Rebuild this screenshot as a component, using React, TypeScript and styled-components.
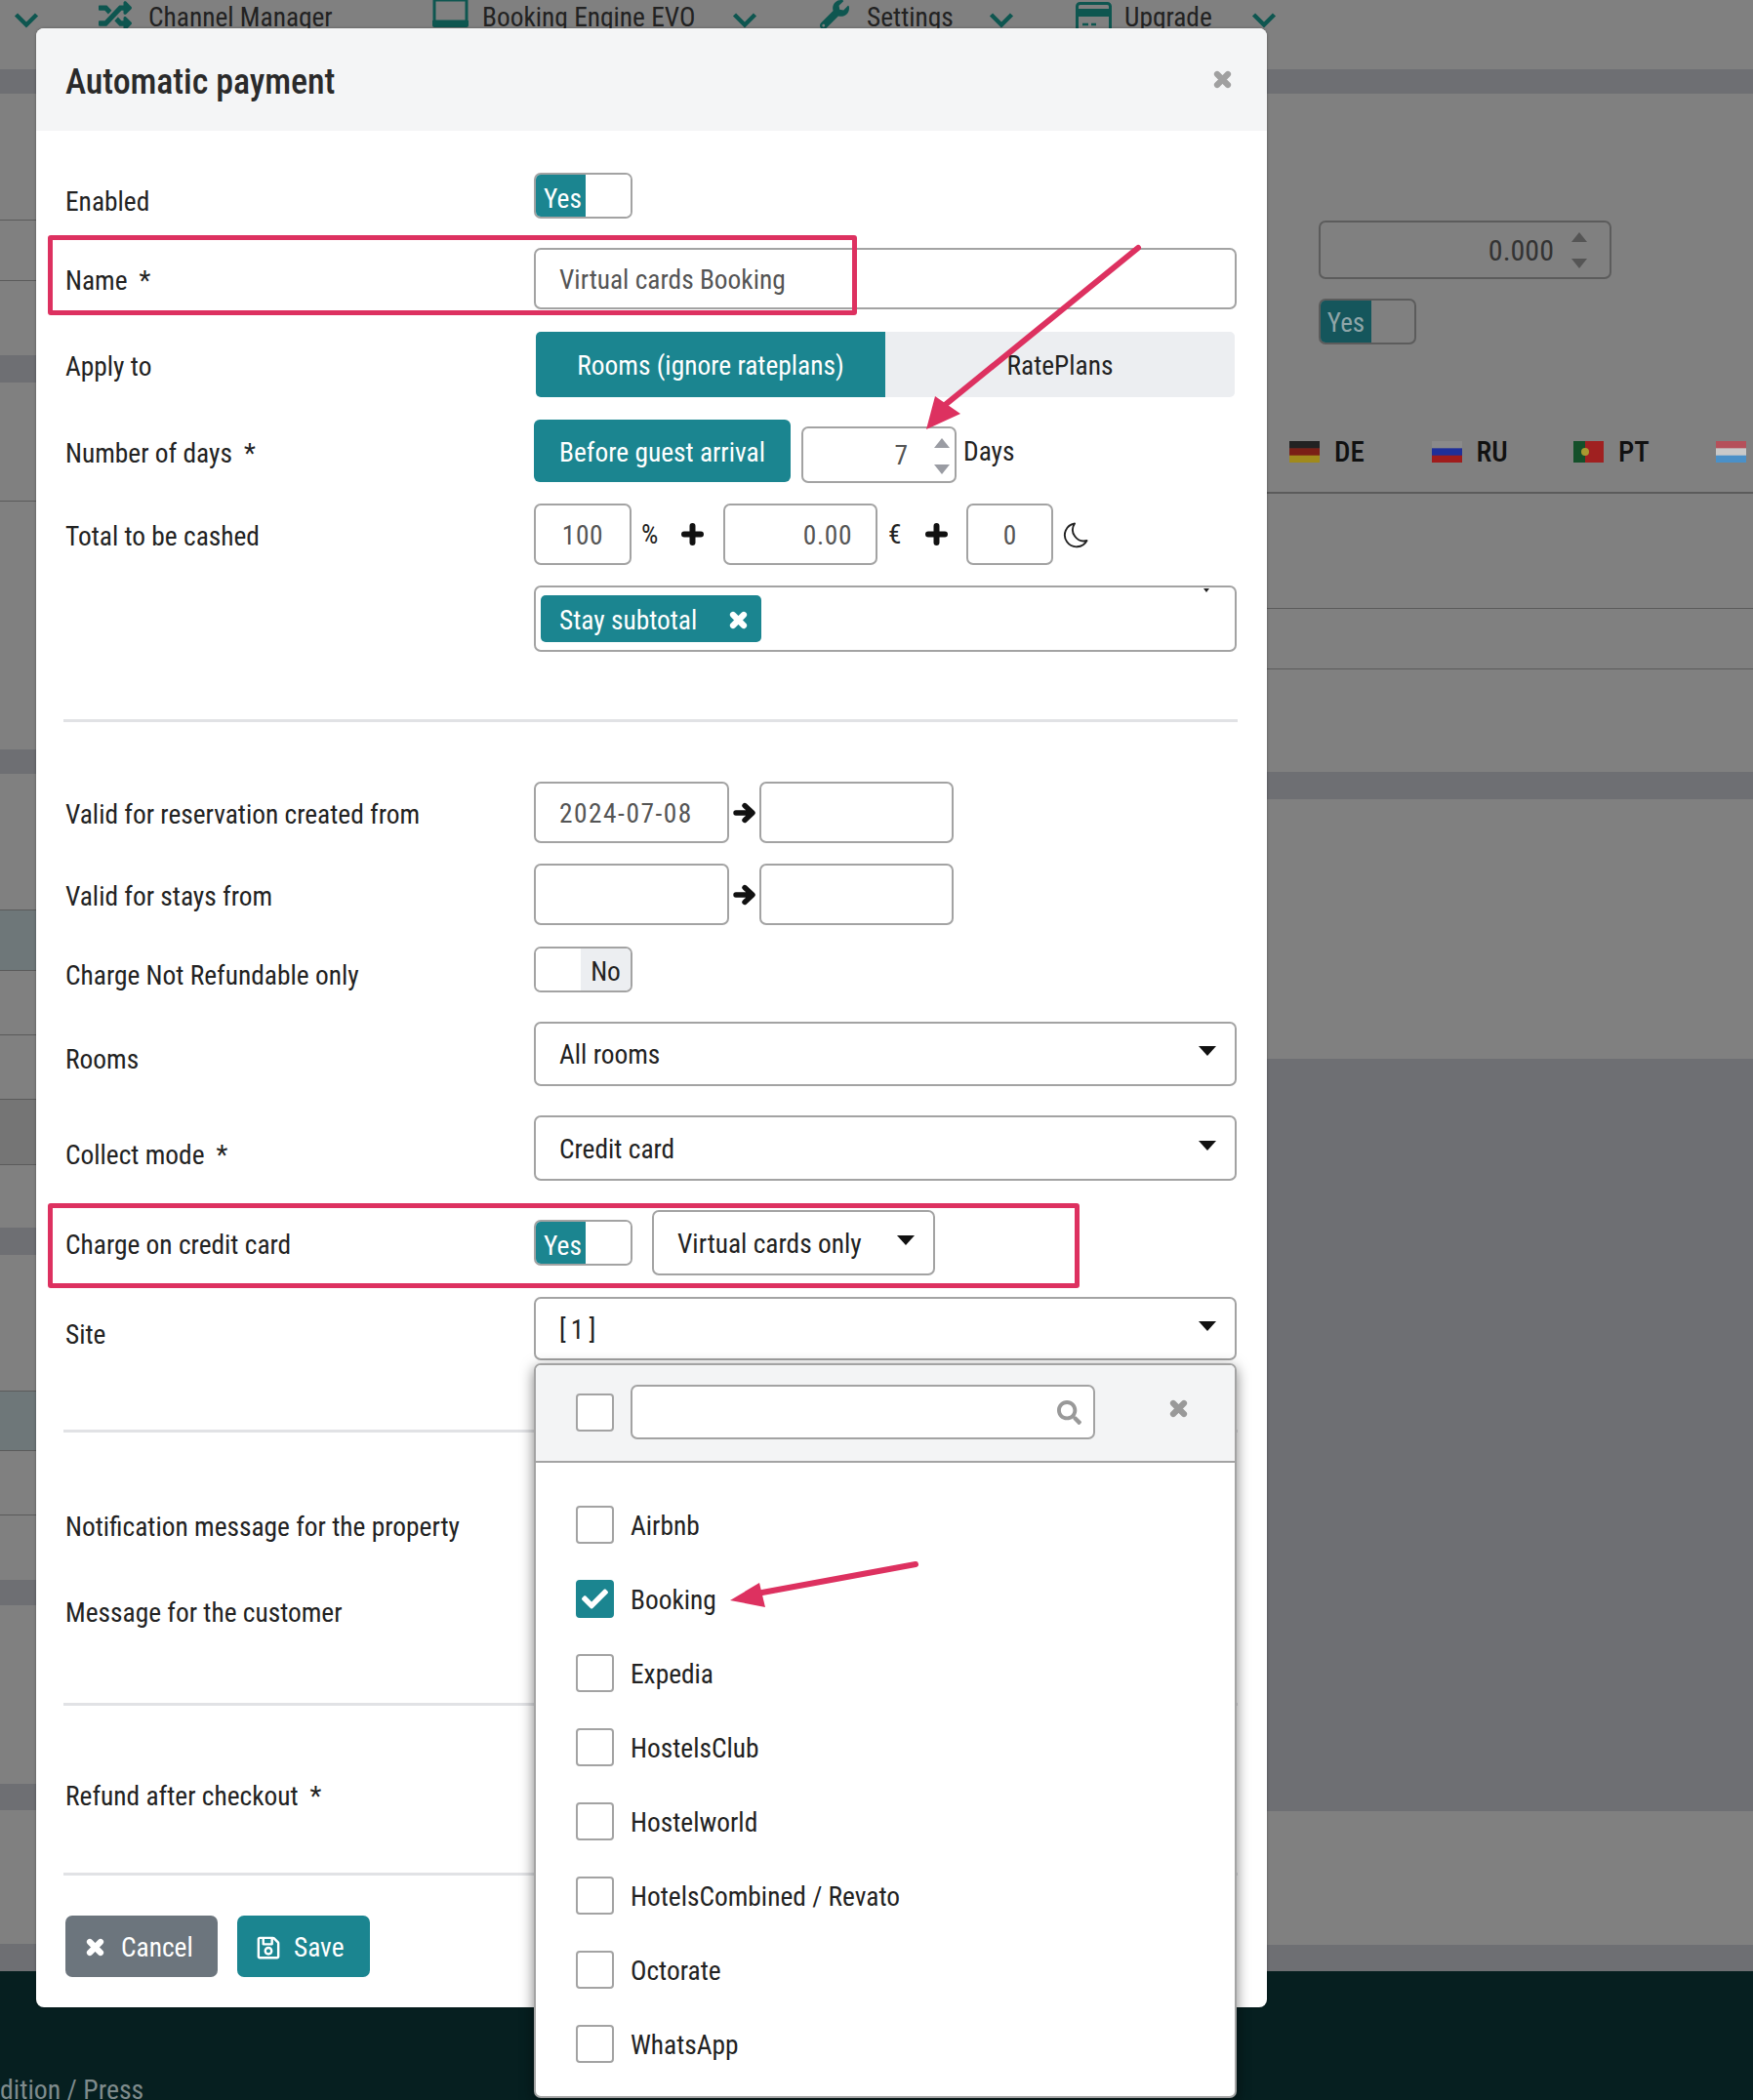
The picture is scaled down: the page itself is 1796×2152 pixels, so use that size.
import React from "react";
import styled, { createGlobalStyle } from "styled-components";
import { FaCheck, FaRegSave, FaSearch, FaRandom, FaWrench } from "react-icons/fa";

const TEAL = "#1b8590";
const BORDER = "#a3a3a3";
const RED = "#dd3160";

const Global = createGlobalStyle`
  html, body { margin: 0; padding: 0; }
  body {
    font-family: Roboto, "Liberation Sans", sans-serif;
    font-stretch: condensed;
    font-size: 27.4px;
    color: #222;
    overflow: hidden;
  }
`;

const Page = styled.div`
  position: relative;
  width: 1796px;
  height: 2152px;
  overflow: hidden;
  background: #808080;
  display: flex;
  flex-direction: column;
`;

/* ---------- page behind the modal ---------- */
const Nav = styled.nav`
  height: 71px;
  display: flex;
  padding-left: 14px;
  align-items: flex-start;
  box-sizing: border-box;
`;
const NavIcon = styled.span<{ $ml: number; $w: number; $h?: number }>`
  margin-left: ${(p) => p.$ml}px;
  width: ${(p) => p.$w}px;
  height: ${(p) => p.$h || 36}px;
  flex: none;
  display: flex;
  align-items: center;
  justify-content: center;
  color: #0e5650;
  svg { flex: none; }
`;
const NavLabel = styled.span<{ $ml: number; $w: number }>`
  margin-left: ${(p) => p.$ml}px;
  width: ${(p) => p.$w}px;
  flex: none;
  line-height: 36px;
  font-size: 27.4px;
  color: #222;
  white-space: nowrap;
`;
const Columns = styled.div`
  display: grid;
  grid-template-columns: 37px 1261px 498px;
  height: 1949px;
`;
const StripeColumn = styled.div`
  display: flex;
  flex-direction: column;
  min-width: 0;
  overflow: hidden;
`;
const TONES: Record<string, string> = {
  plain: "#808080",
  band: "#6e6f73",
  teal: "#6e7779",
  dark: "#757575",
};
const Stripe = styled.div<{ $h: number; $tone: string; $line?: boolean }>`
  height: ${(p) => p.$h}px;
  flex: none;
  box-sizing: border-box;
  background: ${(p) => TONES[p.$tone]};
  border-bottom: ${(p) => (p.$line ? "1px solid #5b5b5b" : "none")};
`;
const SidePanel = styled.div`
  flex: none;
  height: 410px;
  box-sizing: border-box;
  border-bottom: 2px solid #5b5b5b;
  padding-top: 130px;
  display: flex;
  flex-direction: column;
`;
const DimNumber = styled.div`
  margin-left: 53px;
  width: 300px;
  height: 60px;
  box-sizing: border-box;
  border: 2px solid #5c5c5c;
  border-radius: 7px;
  display: flex;
  align-items: center;
  justify-content: flex-end;
  padding: 0 21px 0 0;
  gap: 16px;
  color: #333;
  font-size: 30px;
`;
const DimToggle = styled.div`
  margin: 20px 0 0 53px;
  width: 100px;
  height: 47px;
  box-sizing: border-box;
  border: 2px solid #5c5c5c;
  border-radius: 7px;
  overflow: hidden;
  display: flex;
`;
const DimYes = styled.div`
  width: 52px;
  background: #15565c;
  color: #8fa5a8;
  font-size: 27px;
  display: flex;
  align-items: center;
  justify-content: center;
  padding-top: 2px;
`;
const LangRow = styled.div`
  margin: 92px 0 0 23px;
  display: flex;
  width: 520px;
`;
const Lang = styled.div`
  width: 145.5px;
  flex: none;
  display: flex;
  align-items: center;
  gap: 15px;
  font-size: 29px;
  font-weight: 500;
  color: #111;
  height: 36px;
`;
const Footer = styled.footer`
  height: 132px;
  background: #061f20;
  color: #7f8b8c;
  padding-top: 104px;
  box-sizing: border-box;
  font-size: 27.8px;
  line-height: 36px;
  white-space: nowrap;
`;

/* ---------- modal ---------- */
const Modal = styled.div`
  position: absolute;
  left: 37px;
  top: 29px;
  width: 1261px;
  background: #fff;
  border-radius: 8px;
  box-shadow: 0 0 3px rgba(0, 0, 0, 0.35);
  display: flex;
  flex-direction: column;
  padding-bottom: 31px;
`;
const Head = styled.header`
  height: 105px;
  flex: none;
  box-sizing: border-box;
  background: #f4f5f6;
  border-radius: 8px 8px 0 0;
  padding: 0 36px 0 30px;
  display: flex;
  align-items: center;
  justify-content: space-between;
  margin-bottom: 43px;
`;
const Title = styled.h1`
  margin: 0;
  padding-top: 5px;
  font-size: 36px;
  font-weight: 500;
  letter-spacing: -0.1px;
  color: #2a2a2a;
`;
const CloseIcon = styled.span`
  color: #a0a0a0;
  display: flex;
`;
const Row = styled.div<{ $mt: number; $h: number }>`
  margin-top: ${(p) => p.$mt}px;
  height: ${(p) => p.$h}px;
  display: grid;
  grid-template-columns: 480px 720px;
  padding-left: 30px;
  align-items: center;
`;
const Label = styled.div<{ $shift?: number }>`
  padding-top: ${(p) => ((p.$shift || 0) + 1) * 2}px;
  line-height: 36px;
  color: #222;
  white-space: nowrap;
`;
const Star = styled.span`
  margin-left: 12px;
`;
const Controls = styled.div`
  display: flex;
  align-items: flex-start;
  height: 100%;
`;
const Field = styled.div<{
  $w?: number;
  $align?: string;
  $mt?: number;
  $ml?: number;
  $pr?: number;
  $spaced?: number;
}>`
  width: ${(p) => (p.$w ? `${p.$w}px` : "100%")};
  height: calc(100% - ${(p) => p.$mt || 0}px);
  margin-top: ${(p) => p.$mt || 0}px;
  margin-left: ${(p) => p.$ml || 0}px;
  flex: none;
  box-sizing: border-box;
  border: 2px solid ${BORDER};
  border-radius: 7px;
  background: #fff;
  display: flex;
  align-items: center;
  justify-content: ${(p) => p.$align || "flex-start"};
  padding: 2px ${(p) => p.$pr ?? 24}px 0 ${(p) => (p.$align === "center" ? p.$pr ?? 24 : 24)}px;
  color: #555;
  letter-spacing: ${(p) => p.$spaced || 0}px;
  white-space: nowrap;
`;
const Spin = styled.span<{ $ml?: number }>`
  display: flex;
  flex-direction: column;
  gap: 15px;
  margin-left: ${(p) => p.$ml || 0}px;
`;
const Toggle = styled.div<{ $mt?: number }>`
  width: 101px;
  height: 47px;
  margin-top: ${(p) => p.$mt || 0}px;
  flex: none;
  box-sizing: border-box;
  border: 2px solid ${BORDER};
  border-radius: 7px;
  overflow: hidden;
  display: flex;
`;
const ToggleYes = styled.div`
  width: 51px;
  box-sizing: border-box;
  background: ${TEAL};
  color: #fff;
  display: flex;
  align-items: center;
  justify-content: center;
  padding: 6px 0 0 4px;
`;
const ToggleBlank = styled.div`
  flex: 1;
  background: #fff;
`;
const ToggleNo = styled.div`
  width: 51px;
  background: #eceef1;
  color: #222;
  display: flex;
  align-items: center;
  justify-content: center;
  padding-top: 4px;
`;
const Segments = styled.div`
  margin-left: 2px;
  width: 716px;
  height: 100%;
  display: flex;
  border-radius: 5px;
  overflow: hidden;
`;
const Segment = styled.div<{ $active?: boolean }>`
  flex: 1;
  background: ${(p) => (p.$active ? TEAL : "#eceef1")};
  color: ${(p) => (p.$active ? "#fff" : "#222")};
  display: flex;
  align-items: center;
  justify-content: center;
  padding-top: 2px;
`;
const TealButton = styled.div`
  width: 263px;
  height: 64px;
  flex: none;
  box-sizing: border-box;
  padding: 3px 0 0 26px;
  background: ${TEAL};
  color: #fff;
  border-radius: 6px;
  display: flex;
  align-items: center;
  white-space: nowrap;
`;
const Unit = styled.span<{ $ml: number; $w?: number }>`
  margin-left: ${(p) => p.$ml}px;
  width: ${(p) => (p.$w ? `${p.$w}px` : "auto")};
  flex: none;
  align-self: center;
  display: flex;
  color: #222;
`;
const TagBox = styled.div`
  position: relative;
  width: 100%;
  height: 100%;
  box-sizing: border-box;
  border: 2px solid ${BORDER};
  border-radius: 7px;
  padding: 8px 5px;
  display: flex;
`;
const Tag = styled.div`
  width: 226px;
  height: 48px;
  box-sizing: border-box;
  padding: 3px 14px 0 19px;
  border-radius: 5px;
  background: ${TEAL};
  color: #fff;
  display: flex;
  align-items: center;
  justify-content: space-between;
`;
const TinyCaret = styled.span`
  position: absolute;
  right: 26px;
  top: 1px;
  width: 0;
  height: 0;
  border-left: 3px solid transparent;
  border-right: 3px solid transparent;
  border-top: 4px solid #222;
`;
const Arrow = styled.span`
  width: 31px;
  flex: none;
  align-self: center;
  display: flex;
  justify-content: center;
  color: #111;
`;
const Select = styled.div<{ $w?: number; $ml?: number; $tracked?: boolean }>`
  width: ${(p) => (p.$w ? `${p.$w}px` : "100%")};
  margin-left: ${(p) => p.$ml || 0}px;
  height: 100%;
  flex: none;
  box-sizing: border-box;
  border: 2px solid ${BORDER};
  border-radius: 7px;
  padding: 2px 19px 0 24px;
  display: flex;
  align-items: center;
  justify-content: space-between;
  background: #fff;
  color: #222;
  letter-spacing: ${(p) => (p.$tracked ? "5px" : "0")};
  white-space: nowrap;
`;
const Caret = styled.span`
  width: 0;
  height: 0;
  margin-bottom: 8px;
  border-left: 9px solid transparent;
  border-right: 9px solid transparent;
  border-top: 10px solid #111;
`;
const Divider = styled.hr<{ $mt: number }>`
  margin: ${(p) => p.$mt}px 30px 0 28px;
  border: 0;
  height: 3px;
  background: #e1e2e5;
  flex: none;
`;
const Actions = styled.div`
  margin: 41px 0 0 30px;
  display: flex;
  gap: 20px;
`;
const Action = styled.div<{ $w: number; $bg: string; $pl: number; $gap: number }>`
  width: ${(p) => p.$w}px;
  height: 63px;
  box-sizing: border-box;
  padding: 2px 0 0 ${(p) => p.$pl}px;
  gap: ${(p) => p.$gap}px;
  background: ${(p) => p.$bg};
  color: #fff;
  border-radius: 7px;
  display: flex;
  align-items: center;
`;

/* ---------- overlays ---------- */
const RedBox = styled.div<{ $top: number; $w: number; $h: number }>`
  position: absolute;
  left: 12px;
  top: ${(p) => p.$top}px;
  width: ${(p) => p.$w}px;
  height: ${(p) => p.$h}px;
  box-sizing: border-box;
  border: 5px solid ${RED};
  border-radius: 3px;
  z-index: 1;
  pointer-events: none;
`;
const Dropdown = styled.div`
  position: absolute;
  left: 510px;
  top: 1368px;
  width: 720px;
  height: 753px;
  box-sizing: border-box;
  border: 2px solid ${BORDER};
  border-radius: 7px;
  background: #fff;
  box-shadow: 0 4px 14px rgba(0, 0, 0, 0.5);
  z-index: 2;
  display: flex;
  flex-direction: column;
  overflow: hidden;
`;
const DropHead = styled.div`
  height: 100px;
  flex: none;
  box-sizing: border-box;
  background: #f3f4f5;
  border-bottom: 2px solid ${BORDER};
  padding: 0 0 2px 41px;
  display: flex;
  align-items: center;
`;
const Check = styled.span<{ $on?: boolean }>`
  width: 39px;
  height: 39px;
  flex: none;
  box-sizing: border-box;
  border: 2px solid ${(p) => (p.$on ? TEAL : BORDER)};
  border-radius: 4px;
  background: ${(p) => (p.$on ? TEAL : "#fff")};
  color: #fff;
  display: flex;
  align-items: center;
  justify-content: center;
  font-size: 27px;
`;
const SearchBox = styled.div`
  margin-left: 17px;
  width: 476px;
  height: 56px;
  box-sizing: border-box;
  border: 2px solid ${BORDER};
  border-radius: 7px;
  background: #fff;
  color: #999;
  display: flex;
  align-items: center;
  justify-content: flex-end;
  padding-right: 12px;
  font-size: 25px;
`;
const DropClose = styled.span`
  margin-left: 76px;
  color: #999;
  display: flex;
  padding-bottom: 8px;
`;
const List = styled.div`
  padding: 44px 0 0 41px;
  display: flex;
  flex-direction: column;
  gap: 37px;
`;
const Item = styled.div`
  display: flex;
  align-items: center;
  gap: 17px;
  height: 39px;
  color: #222;
  white-space: nowrap;
`;
const ItemText = styled.span`
  padding-top: 3px;
`;
const Annotations = styled.svg`
  position: absolute;
  left: 0;
  top: 0;
  width: 1261px;
  height: 2123px;
  z-index: 3;
  pointer-events: none;
`;

const Tri = ({ down, c = "#9a9ca3" }: { down?: boolean; c?: string }) => (
  <svg width="20" height="12" viewBox="0 0 20 12">
    <path d={down ? "M2 1h16l-8 10z" : "M10 1l8 10H2z"} fill={c} />
  </svg>
);
const XIcon = ({ size = 19 }: { size?: number }) => (
  <svg width={size} height={size} viewBox="0 0 19 19">
    <path d="M4 4L15 15M15 4L4 15" stroke="currentColor" strokeWidth="6.2" strokeLinecap="round" fill="none" />
  </svg>
);
const PlusIcon = () => (
  <svg width="23" height="23" viewBox="0 0 23 23">
    <path d="M11.5 3v17M3 11.5h17" stroke="#111" strokeWidth="6" strokeLinecap="round" fill="none" />
  </svg>
);
const ArrowIcon = () => (
  <svg width="24" height="24" viewBox="0 0 24 24">
    <path d="M3 12h15M12 4.5l8 7.5-8 7.5" stroke="currentColor" strokeWidth="5.4" strokeLinecap="round" strokeLinejoin="round" fill="none" />
  </svg>
);
const MoonIcon = () => (
  <svg width="26" height="28" viewBox="0 0 26 28">
    <path d="M12 2.5A12 12 0 1 0 24.5 20A11.5 11.5 0 0 1 12 2.5z" fill="none" stroke="#222" strokeWidth="1.9" strokeLinejoin="round" />
  </svg>
);
const ChevIcon = () => (
  <svg width="26" height="17" viewBox="0 0 26 17">
    <path d="M2.5 3L13 13.5 23.5 3" stroke="currentColor" strokeWidth="4.4" fill="none" />
  </svg>
);
const LaptopIcon = () => (
  <svg width="37" height="30" viewBox="0 0 37 30">
    <path d="M2 2h33v22H2z" fill="none" stroke="currentColor" strokeWidth="3" />
    <path d="M0 23h37v5a2 2 0 0 1-2 2H2a2 2 0 0 1-2-2z" fill="currentColor" />
  </svg>
);
const CardIcon = () => (
  <svg width="37" height="32" viewBox="0 0 37 32">
    <rect x="1.5" y="1.5" width="34" height="29" rx="3" fill="none" stroke="currentColor" strokeWidth="3" />
    <path d="M2 7h33v8H2z" fill="currentColor" />
    <path d="M7 23h6M16 23h5" stroke="currentColor" strokeWidth="2.5" />
  </svg>
);
const Flag = ({ colors, dir = "h" }: { colors: string[]; dir?: "h" | "v" }) => (
  <svg width="31" height="22" viewBox="0 0 31 22">
    {colors.map((c, i) =>
      dir === "h" ? (
        <rect key={i} x="0" y={(i * 22) / colors.length} width="31" height={22 / colors.length + 0.5} fill={c} />
      ) : (
        <rect key={i} x={i === 0 ? 0 : 12} y="0" width={i === 0 ? 12 : 19} height="22" fill={c} />
      )
    )}
    {dir === "v" && <circle cx="12" cy="11" r="4" fill="#a89a30" />}
  </svg>
);

const LEFT: [number, string, boolean?][] = [
  [25, "band"], [130, "plain", true], [62, "plain", true], [76, "plain"], [28, "band"],
  [122, "plain", true], [254, "plain"], [25, "band"], [140, "plain", true], [62, "teal", true],
  [66, "plain", true], [66, "plain", true], [67, "dark", true], [64, "plain"], [28, "band"],
  [140, "plain", true], [61, "teal", true], [66, "plain", true], [66, "plain"], [26, "band"],
  [183, "plain"], [27, "band"], [137, "plain"], [28, "band"],
];
const RIGHT_TOP: [number, string, boolean?][] = [[25, "band"]];
const RIGHT: [number, string, boolean?][] = [
  [118, "plain", true], [62, "plain", true], [105, "plain"], [28, "band"], [266, "plain"],
  [771, "band"], [137, "plain"], [28, "band"],
];
const SITES = ["Airbnb", "Booking", "Expedia", "HostelsClub", "Hostelworld", "HotelsCombined / Revato", "Octorate", "WhatsApp"];

const stripes = (list: [number, string, boolean?][]) =>
  list.map(([h, tone, line], i) => <Stripe key={i} $h={h} $tone={tone} $line={line} />);

const Chev = ({ ml }: { ml: number }) => (
  <NavIcon $ml={ml} $w={26} $h={40}>
    <ChevIcon />
  </NavIcon>
);

export default function App() {
  return (
    <Page>
      <Global />
      <Nav>
        <Chev ml={0} />
        <NavIcon $ml={60} $w={36} $h={32}><FaRandom size={34} /></NavIcon>
        <NavLabel $ml={16} $w={188}>Channel Manager</NavLabel>
        <NavIcon $ml={103} $w={37} $h={26}><LaptopIcon /></NavIcon>
        <NavLabel $ml={14} $w={218}>Booking Engine EVO</NavLabel>
        <Chev ml={38} />
        <NavIcon $ml={64} $w={30} $h={30}><FaWrench size={30} /></NavIcon>
        <NavLabel $ml={18} $w={88}>Settings</NavLabel>
        <Chev ml={37} />
        <NavIcon $ml={63} $w={36}><CardIcon /></NavIcon>
        <NavLabel $ml={14} $w={92}>Upgrade</NavLabel>
        <Chev ml={38} />
      </Nav>
      <Columns>
        <StripeColumn>{stripes(LEFT)}</StripeColumn>
        <StripeColumn />
        <StripeColumn>
          {stripes(RIGHT_TOP)}
          <SidePanel>
            <DimNumber>
              0.000
              <Spin><Tri c="#555" /><Tri down c="#555" /></Spin>
            </DimNumber>
            <DimToggle><DimYes>Yes</DimYes></DimToggle>
            <LangRow>
              <Lang><Flag colors={["#222", "#7a1f16", "#a08a1c"]} />DE</Lang>
              <Lang><Flag colors={["#8a8a8a", "#1f2f9a", "#a01c1c"]} />RU</Lang>
              <Lang><Flag dir="v" colors={["#14502a", "#a02020"]} />PT</Lang>
              <Lang><Flag colors={["#b5505a", "#c9c9c9", "#4a90c8"]} /></Lang>
            </LangRow>
          </SidePanel>
          {stripes(RIGHT)}
        </StripeColumn>
      </Columns>
      <Footer>dition / Press</Footer>

      <Modal>
        <Head>
          <Title>Automatic payment</Title>
          <CloseIcon><XIcon /></CloseIcon>
        </Head>

        <Row $mt={0} $h={47}>
          <Label $shift={5}>Enabled</Label>
          <Controls><Toggle><ToggleYes>Yes</ToggleYes><ToggleBlank /></Toggle></Controls>
        </Row>
        <Row $mt={30} $h={63}>
          <Label $shift={1}>Name<Star>*</Star></Label>
          <Controls><Field>Virtual cards Booking</Field></Controls>
        </Row>
        <Row $mt={23} $h={67}>
          <Label $shift={1}>Apply to</Label>
          <Controls>
            <Segments>
              <Segment $active>Rooms (ignore rateplans)</Segment>
              <Segment>RatePlans</Segment>
            </Segments>
          </Controls>
        </Row>
        <Row $mt={23} $h={65}>
          <Label $shift={1}>Number of days<Star>*</Star></Label>
          <Controls>
            <TealButton>Before guest arrival</TealButton>
            <Field $w={159} $mt={7} $ml={11} $align="flex-end" $pr={3}>
              7
              <Spin $ml={25}><Tri /><Tri down /></Spin>
            </Field>
            <Unit $ml={7}>Days</Unit>
          </Controls>
        </Row>
        <Row $mt={21} $h={63}>
          <Label $shift={1}>Total to be cashed</Label>
          <Controls>
            <Field $w={100} $align="center" $pr={0} $spaced={0.6}>100</Field>
            <Unit $ml={10} $w={22}>%</Unit>
            <Unit $ml={19} $w={23}><PlusIcon /></Unit>
            <Field $w={158} $ml={20} $align="flex-end" $pr={24} $spaced={0.6}>0.00</Field>
            <Unit $ml={11} $w={17}>€</Unit>
            <Unit $ml={21} $w={23}><PlusIcon /></Unit>
            <Field $w={89} $ml={19} $align="center">0</Field>
            <Unit $ml={10}><MoonIcon /></Unit>
          </Controls>
        </Row>
        <Row $mt={21} $h={67}>
          <span />
          <TagBox>
            <Tag>Stay subtotal<XIcon /></Tag>
            <TinyCaret />
          </TagBox>
        </Row>
        <Divider $mt={70} />
        <Row $mt={61} $h={63}>
          <Label $shift={1}>Valid for reservation created from</Label>
          <Controls>
            <Field $w={200} $spaced={1.5}>2024-07-08</Field>
            <Arrow><ArrowIcon /></Arrow>
            <Field $w={199} />
          </Controls>
        </Row>
        <Row $mt={21} $h={63}>
          <Label $shift={1}>Valid for stays from</Label>
          <Controls>
            <Field $w={200} />
            <Arrow><ArrowIcon /></Arrow>
            <Field $w={199} />
          </Controls>
        </Row>
        <Row $mt={22} $h={47}>
          <Label $shift={5}>Charge Not Refundable only</Label>
          <Controls><Toggle><ToggleBlank /><ToggleNo>No</ToggleNo></Toggle></Controls>
        </Row>
        <Row $mt={30} $h={66}>
          <Label $shift={5}>Rooms</Label>
          <Controls><Select>All rooms<Caret /></Select></Controls>
        </Row>
        <Row $mt={30} $h={67}>
          <Label $shift={6}>Collect mode<Star>*</Star></Label>
          <Controls><Select>Credit card<Caret /></Select></Controls>
        </Row>
        <Row $mt={30} $h={67}>
          <Label $shift={1}>Charge on credit card</Label>
          <Controls>
            <Toggle $mt={10}><ToggleYes>Yes</ToggleYes><ToggleBlank /></Toggle>
            <Select $w={290} $ml={20}>Virtual cards only<Caret /></Select>
          </Controls>
        </Row>
        <Row $mt={22} $h={65}>
          <Label $shift={5}>Site</Label>
          <Controls><Select $tracked>[1]<Caret /></Select></Controls>
        </Row>
        <Divider $mt={71} />
        <Row $mt={76} $h={40}><Label>Notification message for the property</Label></Row>
        <Row $mt={48} $h={40}><Label>Message for the customer</Label></Row>
        <Divider $mt={73} />
        <Row $mt={72} $h={40}><Label>Refund after checkout<Star>*</Star></Label></Row>
        <Divider $mt={59} />
        <Actions>
          <Action $w={156} $bg="#6c757d" $pl={21} $gap={17}><XIcon />Cancel</Action>
          <Action $w={136} $bg={TEAL} $pl={19} $gap={13}><FaRegSave size={26} />Save</Action>
        </Actions>

        <RedBox $top={212} $w={829} $h={82} />
        <RedBox $top={1204} $w={1057} $h={87} />

        <Dropdown>
          <DropHead>
            <Check />
            <SearchBox><FaSearch /></SearchBox>
            <DropClose><XIcon /></DropClose>
          </DropHead>
          <List>
            {SITES.map((s) => (
              <Item key={s}>
                <Check $on={s === "Booking"}>{s === "Booking" && <FaCheck />}</Check>
                <ItemText>{s}</ItemText>
              </Item>
            ))}
          </List>
        </Dropdown>

        <Annotations viewBox="37 29 1261 2123">
          <path d="M1166 254L962 420" stroke={RED} strokeWidth="6" strokeLinecap="round" />
          <path d="M949 440L958 406L984 424z" fill={RED} />
          <path d="M938 1603L770 1634" stroke={RED} strokeWidth="6" strokeLinecap="round" />
          <path d="M748 1640L778 1622L784 1647z" fill={RED} />
        </Annotations>
      </Modal>
    </Page>
  );
}
